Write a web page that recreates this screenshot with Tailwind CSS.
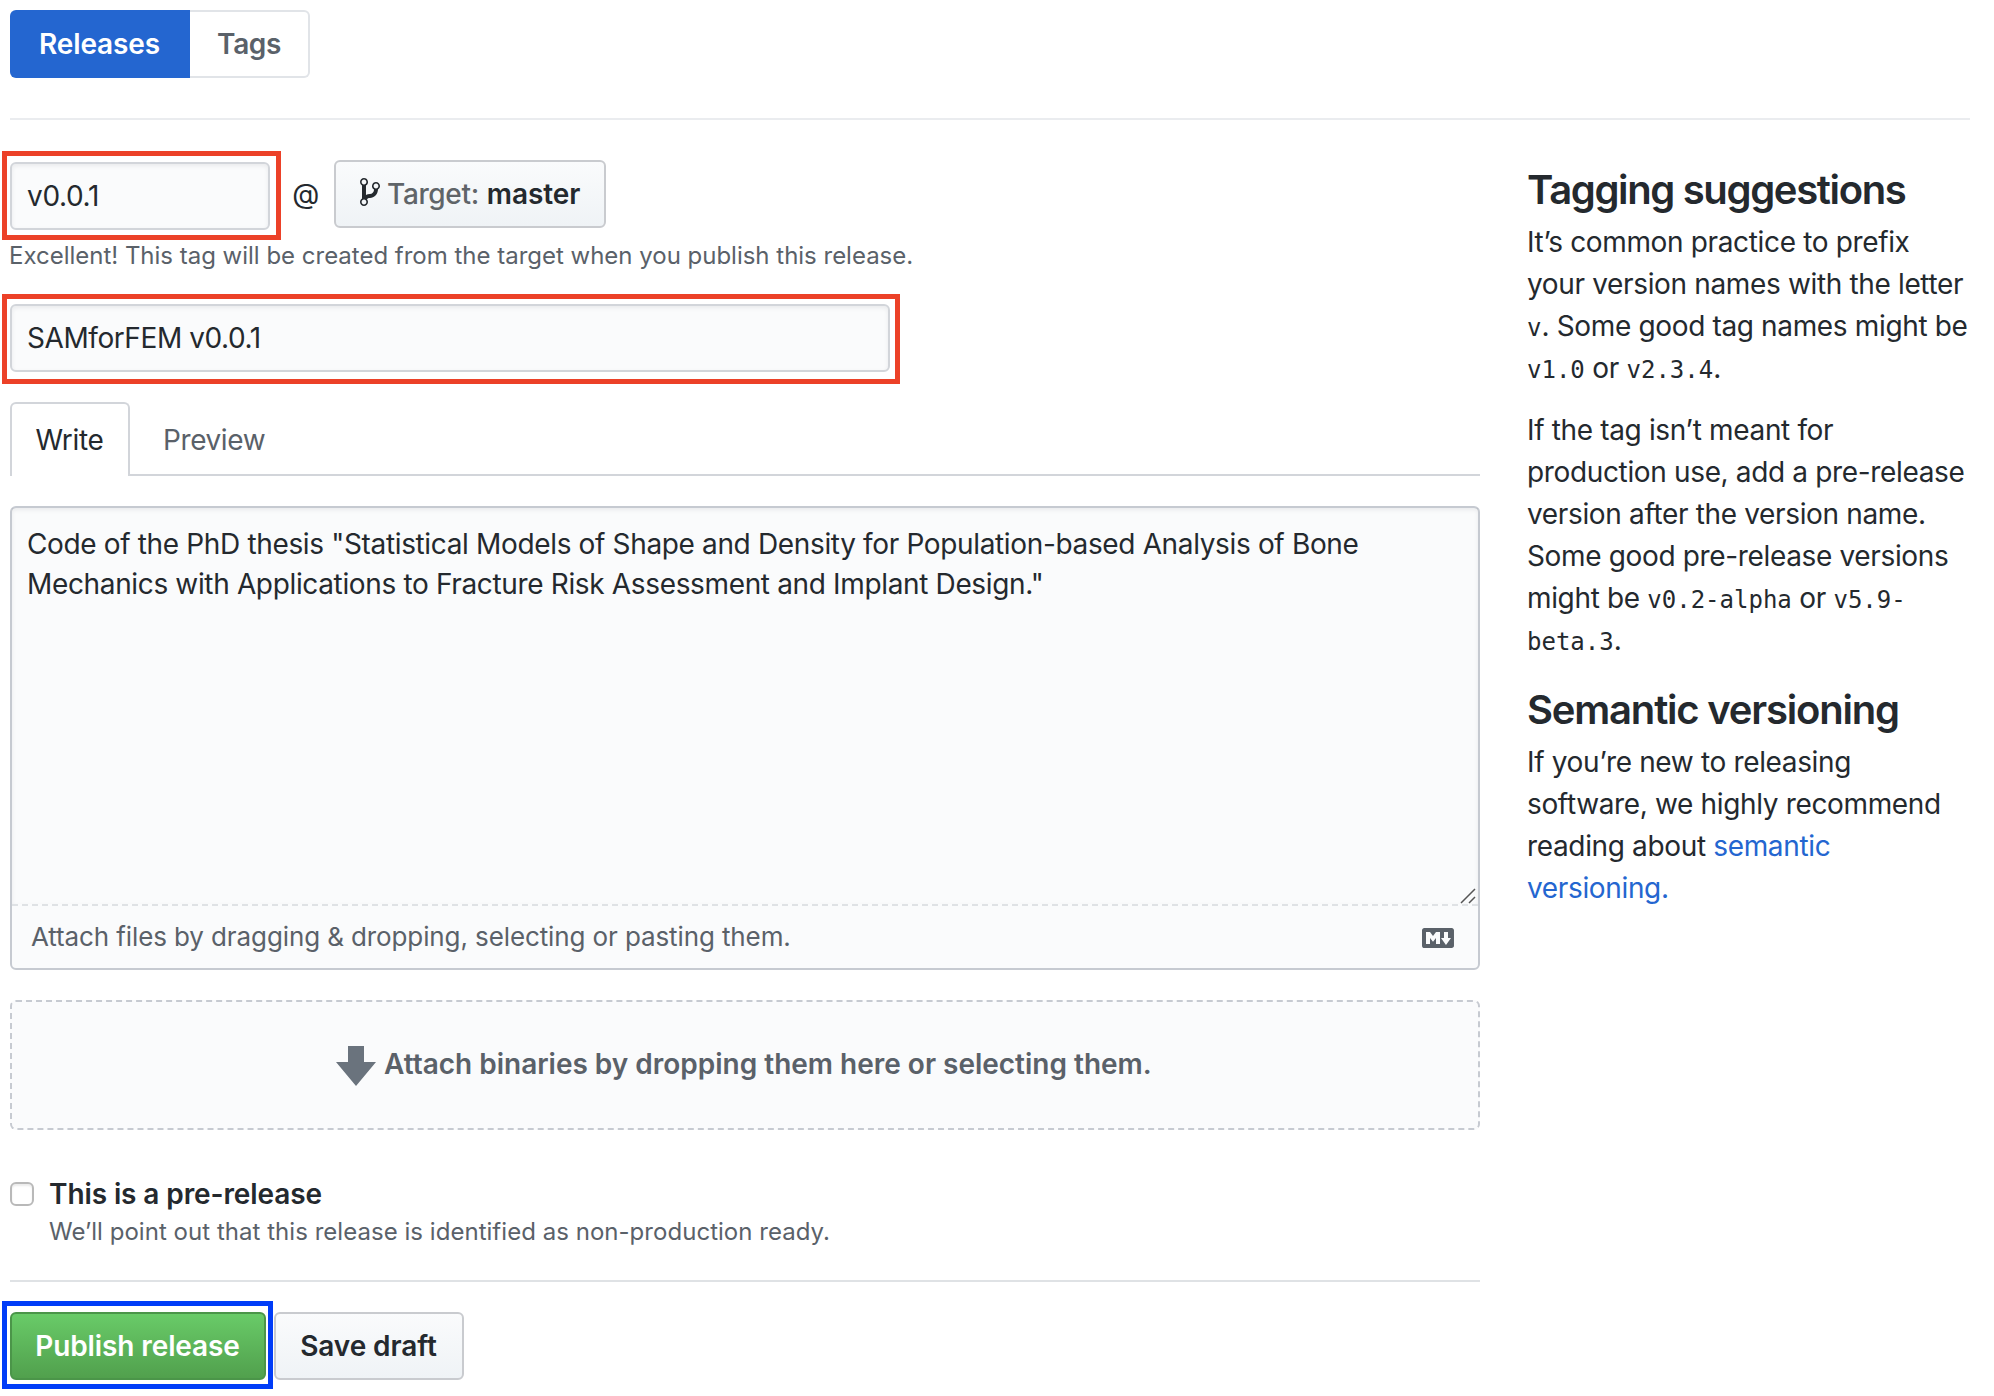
<!DOCTYPE html>
<html lang="en">
<head>
<meta charset="utf-8">
<title>New release</title>
<script src="https://cdn.jsdelivr.net/npm/@tailwindcss/browser@4"></script>
</head>
<body class="bg-white font-['Inter',sans-serif] text-[28px] leading-[42px] tracking-[-0.35px] text-[#24292e]">
<div class="h-[1396px] w-[1994px] overflow-hidden pt-[10px] pr-[24px] pl-[10px]">
  <nav class="flex h-[68px] w-[300px] font-semibold tracking-[-0.12px]">
    <a class="flex w-[180px] items-center justify-center rounded-l-[6px] bg-[#2466d0] pr-px text-white">Releases</a>
    <a class="flex w-[120px] items-center justify-center rounded-r-[6px] border-2 border-l-0 border-[#e1e4e8] tracking-[-0.4px] text-[#5a6169]">Tags</a>
  </nav>
  <hr class="mt-[40px] border-t-2 border-[#eaecef]">
  <div class="flex justify-between">
    <main class="w-[1470px] pt-[40px]">
      <div class="flex h-[70px] items-start">
        <div class="relative mt-[2px] flex h-[68px] w-[260px] items-center rounded-[6px] border-2 border-[#d2d5da] bg-[#fafbfc] pl-[15px] shadow-[inset_0_2px_4px_rgba(27,31,35,0.075)]">v0.0.1
          <span class="absolute -top-[13px] -left-[10px] h-[89px] w-[279px] border-[5px] border-[#ec4128]"></span>
        </div>
        <span class="flex h-[68px] w-[64px] items-center justify-center pl-[7px]">@</span>
        <button class="flex h-[68px] w-[272px] items-center rounded-[6px] border-2 border-[#c9cbcf] bg-linear-to-b from-[#fafbfc] to-[#eff3f6] pl-[24px] font-semibold">
          <svg class="-mt-[5px] mr-[7px] h-[32px] w-[20px]" viewBox="0 0 10 16" fill="currentColor"><path fill-rule="evenodd" d="M10 5c0-1.11-.89-2-2-2a1.993 1.993 0 0 0-1 3.72v.3c-.02.52-.23.98-.63 1.38-.4.4-.86.61-1.38.63-.83.02-1.48.16-2 .45V4.720a1.993 1.993 0 0 0-1-3.720C.88 1 0 1.89 0 3a2 2 0 0 0 1 1.72v6.56c-.59.35-1 .99-1 1.72 0 1.11.89 2 2 2 1.11 0 2-.89 2-2 0-.53-.2-1-.53-1.36.09-.06.48-.41.59-.47.25-.11.56-.17.94-.17 1.05-.05 1.95-.45 2.75-1.25S8.950 7.770 9 6.730h-.02C9.590 6.370 10 5.730 10 5zM2 1.800c.66 0 1.200.55 1.200 1.200 0 .65-.55 1.200-1.200 1.200C1.350 4.200.800 3.650.800 3c0-.65.55-1.200 1.200-1.200zm0 12.410c-.66 0-1.200-.55-1.200-1.200 0-.65.55-1.200 1.200-1.200.65 0 1.200.55 1.200 1.200 0 .65-.55 1.200-1.200 1.200zm6-8c-.66 0-1.200-.55-1.200-1.200 0-.65.55-1.200 1.200-1.200.65 0 1.200.55 1.200 1.200 0 .65-.55 1.200-1.200 1.200z"/></svg>
          <span class="mr-[8px] font-medium text-[#5f6468]">Target:</span><span class="tracking-[-0.1px]">master</span>
        </button>
      </div>
      <p class="-ml-px mt-[8px] h-[36px] text-[24px] leading-[36px] tracking-[-0.01px] text-[#5a6169]">Excellent! This tag will be created from the target when you publish this release.</p>
      <div class="relative mt-[30px] flex h-[68px] w-[880px] items-center rounded-[6px] border-2 border-[#d2d5da] bg-[#fafbfc] pl-[15px] tracking-[-0.42px] shadow-[inset_0_2px_4px_rgba(27,31,35,0.075)]">SAMforFEM v0.0.1
        <span class="absolute -top-[12px] -left-[10px] h-[90px] w-[898px] border-[5px] border-[#ec4128]"></span>
      </div>
      <div class="mt-[30px] flex h-[74px] border-b-2 border-[#d2d5da]">
        <a class="flex h-[74px] w-[120px] items-center justify-center rounded-t-[6px] border-2 border-b-0 border-[#d2d5da] bg-white pr-px">Write</a>
        <a class="flex h-[76px] items-center pl-[33px] tracking-[-0.4px] text-[#5a6169]">Preview</a>
      </div>
      <section class="mt-[30px] flex h-[464px] flex-col rounded-[6px] border-2 border-[#c6cad1] bg-[#fafbfc]">
        <div class="relative h-[398px] border-b-2 border-dashed border-[#dfe2e5] px-[15px] pt-[16px] leading-[40px] shadow-[inset_0_2px_4px_rgba(27,31,35,0.075)]">
          <p class="whitespace-nowrap">Code of the PhD thesis "Statistical Models of Shape and Density for Population-based Analysis of Bone<br>Mechanics with Applications to Fracture Risk Assessment and Implant Design."</p>
          <svg class="absolute right-[2px] bottom-0 h-[16px] w-[16px]" viewBox="0 0 16 16" fill="none" stroke="#555" stroke-width="1.5"><path d="M1 15L15 1M9 15L15 9"/></svg>
        </div>
        <div class="flex flex-1 items-center justify-between pr-[24px] pl-[19px] text-[26px] tracking-[-0.11px] text-[#5a6169]">
          <span>Attach files by dragging &amp; dropping, selecting or pasting them.</span>
          <svg class="mt-[2px] h-[32px] w-[32px]" viewBox="0 0 16 16" fill="#5a6169"><path fill-rule="evenodd" d="M14.850 3H1.150C.520 3 0 3.520 0 4.150v7.690C0 12.480.520 13 1.150 13h13.690c.640 0 1.150-.520 1.150-1.150v-7.700C16 3.520 15.480 3 14.850 3zM9 11H7V8L5.500 9.920 4 8v3H2V5h2l1.500 2L7 5h2v6zm2.990.500L9.500 8H11V5h2v3h1.500l-2.510 3.500z"/></svg>
        </div>
      </section>
      <section class="mt-[30px] flex h-[130px] items-center rounded-[6px] border-2 border-dashed border-[#c6cad1] bg-[#fafbfc] pl-[324px] font-semibold tracking-[-0.01px] text-[#5a6169]">
        <svg class="mt-[2px] mr-[8px] h-[40px] w-[40px]" viewBox="0 0 40 40" fill="#6a737d"><path d="M12 0h16v16h12L20 40 0 16h12z"/></svg>
        <span class="-mt-[2px]">Attach binaries by dropping them here or selecting them.</span>
      </section>
      <div class="mt-[43px] flex gap-[15px]">
        <span class="mt-[9px] h-[24px] w-[24px] rounded-[6px] border-2 border-[#b9b9b9] bg-white shadow-[inset_0_2px_2px_rgba(0,0,0,0.08)]"></span>
        <div>
          <p class="font-semibold tracking-[-0.1px]">This is a pre-release</p>
          <p class="-mt-px text-[24px] leading-[36px] tracking-[0.035px] text-[#5a6169]">We’ll point out that this release is identified as non-production ready.</p>
        </div>
      </div>
      <hr class="mt-[30px] border-t-2 border-[#dfe2e5]">
      <div class="mt-[30px] flex gap-[8px] font-semibold tracking-[-0.1px]">
        <button class="relative flex h-[68px] w-[256px] items-center justify-center rounded-[6px] border-2 border-[#4b9549] bg-linear-to-b from-[#69cb68] to-[#51a04d] pr-px text-white">Publish release
          <span class="absolute -top-[13px] -left-[10px] h-[88px] w-[271px] border-[5px] border-[#003cf8]"></span>
        </button>
        <button class="flex h-[68px] w-[190px] items-center justify-center rounded-[6px] border-2 border-[#c9cbcf] bg-linear-to-b from-[#fafbfc] to-[#eff3f6] pr-px">Save draft</button>
      </div>
    </main>
    <aside class="w-[443px] pt-[40px] whitespace-nowrap">
      <h3 class="text-[40px] leading-[60px] font-semibold tracking-[-1.35px]">Tagging suggestions</h3>
      <p class="mt-[1px]">It’s common practice to prefix<br>your version names with the letter<br><code class="font-['DejaVu_Sans_Mono',monospace] text-[24px] leading-none tracking-normal">v</code>. Some good tag names might be<br><code class="font-['DejaVu_Sans_Mono',monospace] text-[24px] leading-none tracking-normal">v1.0</code> or <code class="font-['DejaVu_Sans_Mono',monospace] text-[24px] leading-none tracking-normal">v2.3.4</code>.</p>
      <p class="mt-[20px]">If the tag isn’t meant for<br>production use, add a pre-release<br>version after the version name.<br>Some good pre-release versions<br>might be <code class="font-['DejaVu_Sans_Mono',monospace] text-[24px] leading-none tracking-normal">v0.2-alpha</code> or <code class="font-['DejaVu_Sans_Mono',monospace] text-[24px] leading-none tracking-normal">v5.9-</code><br><code class="font-['DejaVu_Sans_Mono',monospace] text-[24px] leading-none tracking-normal">beta.3</code>.</p>
      <h3 class="mt-[19px] text-[40px] leading-[60px] font-semibold tracking-[-1.2px]">Semantic versioning</h3>
      <p class="mt-[1px]">If you’re new to releasing<br>software, we highly recommend<br>reading about <a class="text-[#2466d0]">semantic<br>versioning.</a></p>
    </aside>
  </div>
</div>
</body>
</html>
